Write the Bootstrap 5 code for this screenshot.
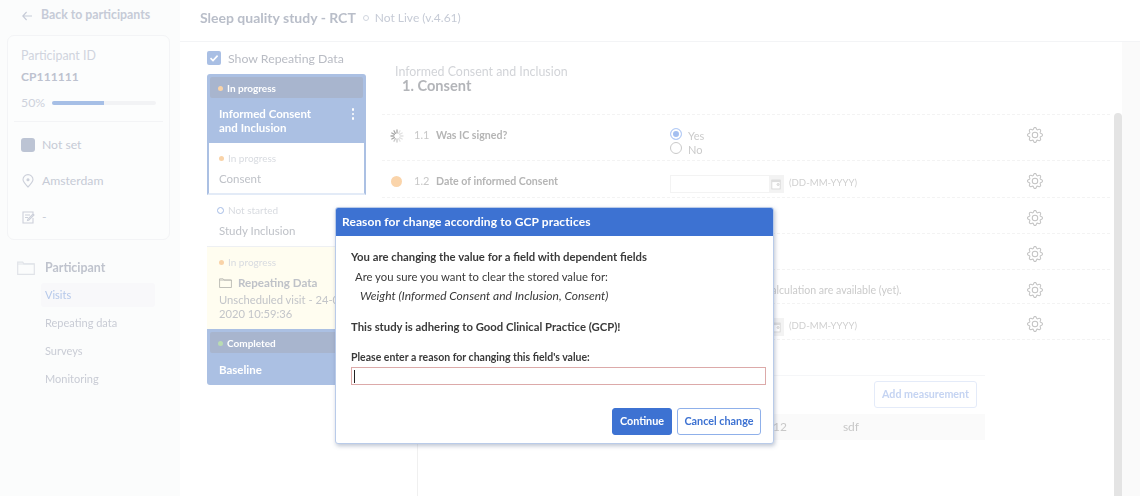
<!DOCTYPE html>
<html lang="en">
<head>
<meta charset="utf-8">
<title>Reason for change</title>
<link rel="stylesheet" href="https://cdn.jsdelivr.net/npm/bootstrap@5.3.0/dist/css/bootstrap.min.css">
<style>
html,body{height:496px;overflow:hidden;background:#fff;font-family:"Lato","Liberation Sans",sans-serif;font-size:12px;}
.stage{position:relative;width:1140px;height:496px;overflow:hidden;}
.backdrop-page{height:496px;filter:blur(.45px);}
.side{width:180px;background:#fbfcfc;flex:none;height:496px;padding:0 10px 0 7px;}
.back{height:31px;margin-bottom:4px;padding-left:15px;color:#c6cbd7;font-weight:700;font-size:12.3px;gap:9px;}
.pcard{height:205px;border:1px solid #f3f4f6;border-radius:7px;background:#fcfdfd;padding:12px 6px 0 6px;}
.pid{color:#d0d4de;font-size:12.4px;line-height:16px;padding-left:7px;}
.pcode{color:#bdc2cf;font-size:12px;font-weight:700;line-height:16px;margin-top:5px;padding-left:7px;letter-spacing:.1px;}
.pbar-wrap{padding-left:7px;margin-top:10px;gap:7px;color:#ced2dc;font-size:12.3px;line-height:16px;}
.pbar{height:4px;width:104px;background:#f2f3f5;border-radius:2px;}
.pbar .progress-bar{background:#a6bfe6;}
.pdiv{border-top:1px solid #f3f4f6;margin:10px 0 5px;}
.pmeta{height:36px;padding-left:7px;color:#c6cbd6;font-size:12.2px;gap:7px;}
.pmeta svg,.swatch{width:14px;height:14px;flex:none;}
.swatch{background:#bcc4d4;border-radius:3px;}
.pgroup{margin-top:17px;padding-left:10px;height:22px;gap:10px;color:#bfc3cd;font-weight:700;font-size:12.4px;}
.snav{margin-left:34px;width:114px;margin-top:4px;}
.snav-item{height:24px;margin-bottom:4px;padding-left:4px;color:#c9ccd5;font-size:11px;display:flex;align-items:center;border-radius:3px;}
.snav-item.on{background:#f8f8fa;color:#b5c8ea;}
.topbar{height:42px;border-bottom:1px solid #f3f4f6;padding-left:20px;}
.ttl{color:#b9bec9;font-size:14px;font-weight:700;}
.ring{width:6px;height:6px;border:1px solid #d0d5de;border-radius:50%;margin:0 6px 0 7px;}
.live{color:#c6cbd6;font-size:12px;}
.content{height:454px;padding-left:27px;}
.stepcol{width:159px;flex:none;}
.repeat{height:32px;gap:7px;padding-top:2px;color:#b9bcc4;font-size:12.3px;}
.chk{width:14px;height:14px;background:#a9bfe4;border-radius:2px;color:#fff;flex:none;margin-top:-2px;}
.stepblue{background:#abc0e3;color:#fff;padding:3px 3px 0;font-weight:700;}
.chip{height:21px;background:#a8b5ce;border-radius:2px;font-size:10px;padding:1px 0 0 8px;gap:4px;}
.dot{width:5px;height:5px;border-radius:50%;display:inline-block;flex:none;}
.dot-o{background:#f9d3a8;}
.dot-g{background:#b9dcb2;}
.dot-b{width:7px;height:7px;border:1px solid #a4bbe6;background:#fff;margin-left:-2px;}
.sname{font-size:11.5px;line-height:13.5px;padding:9px 9px 9px;display:flex;justify-content:space-between;}
.kebab{gap:2px;margin-top:1px;}
.kebab i{display:block;width:2.5px;height:2.5px;background:#fff;border-radius:50%;}
.stepw{height:52px;padding:9px 0 0 12px;background:#fff;border-bottom:1px solid #eef0f3;}
.stepw.act{border:solid #abc0e3;border-width:0 2px 2px;padding-left:10px;border-bottom-color:#e3ebf7;}
.sstat{font-size:10px;color:#d8dbe0;gap:4px;line-height:12px;}
.sval{font-size:11.5px;color:#bfc2c8;margin-top:8px;line-height:14px;}
.stepy{height:82px;background:#fffdf0;padding:9px 6px 0 12px;}
.rdata{font-size:11.6px;font-weight:700;color:#bfc2c8;margin-top:8px;gap:6px;line-height:14px;}
.rsub{font-size:11.2px;color:#c3c5c9;line-height:13.5px;margin-top:3px;}
.stepblue.last{height:56px;border-radius:0 0 3px 3px;}
.stepblue.last .sname{padding-top:10px;}
.stepblue.first{border-radius:3px 3px 0 0;}
.formcol{width:728px;margin-left:16px;flex:none;}
.ftitle{padding:23px 0 0 13px;height:72px;line-height:14px;color:#d2d4d8;font-size:12.4px;}
.ftitle b{display:block;color:#b3b5b9;font-size:14.6px;line-height:14px;padding-left:7px;}
.frow{border-top:1px dashed #f3f3f3;padding-top:13px;display:flex;align-items:flex-start;line-height:14px;font-size:10.6px;color:#b5b5b5;}
.h46{height:46px}.h37{height:37px}.h36{height:36px}.h34{height:34px}
.fst{width:32px;padding-left:8px;flex:none;height:14px;}
.fno{width:22px;flex:none;color:#c8c8c8;font-size:11px;}
.flbl{width:234px;flex:none;font-weight:700;}
.fval{width:356px;flex:none;color:#cbcbcb;}
.fgear{width:18px;height:16px;margin-top:-1px;flex:none;color:#c3c3c3;}
.orange{width:11px;height:11px;border-radius:50%;background:#fad4aa;display:block;margin:2px 0 0 1px;}
.radio{gap:6px;color:#cbcbcb;height:14px;font-size:11px;padding-top:2px;}
.radio i{width:12px;height:12px;border:1px solid #c9c9c9;border-radius:50%;background:#fff;flex:none;margin-top:-4px;}
.radio i.on{border-color:#b5ccf6;background:#a4bff0;box-shadow:inset 0 0 0 2px #fff;}
.dinp{width:114px;height:18px;border:1px solid #f3f3f3;margin-top:1px;justify-content:flex-end;flex:none;}
.dcal{width:14px;height:16px;background:#f3f3f3;padding:3px 1px;}
.dtxt{margin-left:5px;margin-top:2px;font-size:9.6px;color:#d0d0d0;}
.rsec{margin-left:35px;width:568px;height:160px;border-top:1px solid #f5f6f8;border-left:1px solid #f0f0f0;}
.addm{height:27px;width:103px;margin:5px 8px 0 auto;display:block;padding:0;font-size:10.7px;font-weight:700;color:#c5d4f2;background:#fff;border:1px solid #e4ebf9;border-radius:3px;}
.rtab{height:26px;margin-top:6px;background:#fafafa;color:#c8c8c8;font-size:12px;padding-left:355px;gap:56px;}
.sbar{width:8px;margin:71px 0 0 4px;background:#e4e4e4;border-radius:4px 4px 0 0;flex:none;height:383px;}
.strack{width:18px;background:#fafafa;height:454px;flex:none;}
.dlg{position:absolute;left:335px;top:207px;width:439px;height:237px;background:#fff;border:1px solid #b9cbe9;border-radius:3px;box-shadow:1px 2px 4px rgba(70,90,130,.35);color:#3a3a3a;z-index:5;overflow:hidden;}
.dlg-h{height:28px;background:#3d72d2;color:#fff;font-size:12px;font-weight:700;padding:0 0 1px 6px;letter-spacing:.1px;}
.dlg-b{padding:11px 7px 0 15px;font-size:11.3px;line-height:19.5px;}
.dlg-b p{margin:0;}
.dlg-b .i1{padding-left:4px;}
.dlg-b .i2{padding-left:9px;font-style:italic;font-size:12px;}
.dlg-b .gap{margin-top:11.5px;}
.dlg-b .dlg-l{font-size:10.5px;font-weight:700;margin-top:11.5px;line-height:18.5px;}
.reason{height:18px;min-height:0;border-radius:0;border:1px solid #dcaaa9;padding:0 2px;margin-top:0;box-shadow:none;background:#fff;}
.caret-bar{display:block;width:1px;height:13px;background:#222;margin-top:2px;}
.dlg-f{gap:5px;padding:23px 12px 0 0;}
.dlg-f .btn{height:27px;font-size:10.8px;font-weight:700;padding:0;border-radius:3px;}
.bcont{width:60px;background:#3d72d2;border:1px solid #3d72d2;color:#fff;}
.bcanc{width:84px;background:#fff;border:1px solid #8fb0ea;color:#3d72d2;}
</style>
</head>
<body>
<svg width="0" height="0" class="d-none">
<symbol id="g" viewBox="0 0 16 16"><path fill="currentColor" d="M8 4.754a3.246 3.246 0 1 0 0 6.492 3.246 3.246 0 0 0 0-6.492zM5.754 8a2.246 2.246 0 1 1 4.492 0 2.246 2.246 0 0 1-4.492 0z"/><path fill="currentColor" d="M9.796 1.343c-.527-1.79-3.065-1.79-3.592 0l-.094.319a.873.873 0 0 1-1.255.52l-.292-.16c-1.64-.892-3.433.902-2.54 2.541l.159.292a.873.873 0 0 1-.52 1.255l-.319.094c-1.79.527-1.79 3.065 0 3.592l.319.094a.873.873 0 0 1 .52 1.255l-.16.292c-.892 1.64.901 3.434 2.541 2.54l.292-.159a.873.873 0 0 1 1.255.52l.094.319c.527 1.79 3.065 1.79 3.592 0l.094-.319a.873.873 0 0 1 1.255-.52l.292.16c1.64.893 3.434-.902 2.54-2.541l-.159-.292a.873.873 0 0 1 .52-1.255l.319-.094c1.79-.527 1.79-3.065 0-3.592l-.319-.094a.873.873 0 0 1-.52-1.255l.16-.292c.893-1.64-.902-3.433-2.541-2.54l-.292.159a.873.873 0 0 1-1.255-.52l-.094-.319zm-2.633.283c.246-.835 1.428-.835 1.674 0l.094.319a1.873 1.873 0 0 0 2.693 1.115l.291-.16c.764-.415 1.6.42 1.184 1.185l-.159.292a1.873 1.873 0 0 0 1.116 2.692l.318.094c.835.246.835 1.428 0 1.674l-.319.094a1.873 1.873 0 0 0-1.115 2.693l.16.291c.415.764-.42 1.6-1.185 1.184l-.291-.159a1.873 1.873 0 0 0-2.693 1.116l-.094.318c-.246.835-1.428.835-1.674 0l-.094-.319a1.873 1.873 0 0 0-2.692-1.115l-.292.16c-.764.415-1.6-.42-1.184-1.185l.159-.291A1.873 1.873 0 0 0 1.945 8.93l-.319-.094c-.835-.246-.835-1.428 0-1.674l.319-.094A1.873 1.873 0 0 0 3.06 4.377l-.16-.292c-.415-.764.42-1.6 1.185-1.184l.292.159a1.873 1.873 0 0 0 2.692-1.115l.094-.319z"/></symbol>
<symbol id="c" viewBox="0 0 14 16"><rect x="1" y="1.5" width="12" height="13" fill="#fff" stroke="#cfcfcf"/><rect x="1" y="1.5" width="12" height="3" fill="#dedede"/><circle cx="10" cy="8" r="1.4" fill="none" stroke="#bdbdbd"/></symbol>
<symbol id="f" viewBox="0 0 18 14"><path d="M.7 13.3V1.2h5l1.2 1.6h10.4v10.5z" fill="none" stroke="currentColor" stroke-width="1.2"/><path d="M.7 3h16.6" stroke="currentColor" stroke-width="1"/></symbol>
</svg>
<div class="stage">
<div class="backdrop-page d-flex">
  <aside class="side">
    <div class="back d-flex align-items-center">
      <svg width="10" height="10" viewBox="0 0 10 10" fill="none" stroke="#c6cbd7" stroke-width="1.1"><path d="M10 5H.8M4.6 1 .8 5l3.8 4"/></svg>
      <span>Back to participants</span>
    </div>
    <div class="pcard">
      <div class="pid">Participant ID</div>
      <div class="pcode">CP111111</div>
      <div class="pbar-wrap d-flex align-items-center">
        <span>50%</span>
        <div class="progress pbar"><div class="progress-bar" style="width:50%"></div></div>
      </div>
      <div class="pdiv"></div>
      <div class="pmeta d-flex align-items-center"><span class="swatch"></span><span>Not set</span></div>
      <div class="pmeta d-flex align-items-center"><svg viewBox="0 0 14 14" fill="none" stroke="#ccd0da" stroke-width="1.1"><path d="M7 13C4 10 2 8 2 5.6a5 5 0 0 1 10 0C12 8 10 10 7 13z"/><circle cx="7" cy="5.8" r="1" fill="#ccd0da"/></svg><span>Amsterdam</span></div>
      <div class="pmeta d-flex align-items-center"><svg viewBox="0 0 14 14" fill="none" stroke="#ccd0da" stroke-width="1.1"><path d="M12 8v5H2V2h10v2M4 5h5M4 7.5h3M6.5 10.5l1.2-.3L13 5l-1-1-5.2 5.2z"/></svg><span>-</span></div>
    </div>
    <div class="pgroup d-flex align-items-center"><svg width="18" height="14" style="color:#e0e3e8"><use href="#f"/></svg><span>Participant</span></div>
    <div class="snav">
      <div class="snav-item on">Visits</div>
      <div class="snav-item">Repeating data</div>
      <div class="snav-item">Surveys</div>
      <div class="snav-item">Monitoring</div>
    </div>
  </aside>
  <main class="flex-grow-1">
    <div class="topbar d-flex align-items-center pb-2">
      <span class="ttl">Sleep quality study - RCT</span><span class="ring"></span><span class="live">Not Live (v.4.61)</span>
    </div>
    <div class="content d-flex">
      <div class="stepcol">
        <div class="repeat d-flex align-items-center">
          <span class="chk d-flex align-items-center justify-content-center"><svg width="10" height="10" viewBox="0 0 10 10" fill="none" stroke="#fff" stroke-width="1.6"><path d="M1.5 5.2 4 7.6l4.6-5"/></svg></span>
          <span>Show Repeating Data</span>
        </div>
        <div class="stepblue first">
          <div class="chip d-flex align-items-center"><span class="dot dot-o"></span><span>In progress</span></div>
          <div class="sname"><span>Informed Consent<br>and Inclusion</span><span class="kebab d-flex flex-column"><i></i><i></i><i></i></span></div>
        </div>
        <div class="stepw act">
          <div class="sstat d-flex align-items-center"><span class="dot dot-o"></span><span>In progress</span></div>
          <div class="sval">Consent</div>
        </div>
        <div class="stepw">
          <div class="sstat d-flex align-items-center"><span class="dot dot-b"></span><span>Not started</span></div>
          <div class="sval">Study Inclusion</div>
        </div>
        <div class="stepy">
          <div class="sstat d-flex align-items-center"><span class="dot dot-o"></span><span>In progress</span></div>
          <div class="rdata d-flex align-items-center"><svg width="13" height="10" style="color:#b5b5b0"><use href="#f"/></svg><span>Repeating Data</span></div>
          <div class="rsub">Unscheduled visit - 24-01-<br>2020 10:59:36</div>
        </div>
        <div class="stepblue last">
          <div class="chip d-flex align-items-center"><span class="dot dot-g"></span><span>Completed</span></div>
          <div class="sname"><span>Baseline</span></div>
        </div>
      </div>
      <div class="formcol">
        <div class="ftitle">Informed Consent and Inclusion<b>1. Consent</b></div>
        <div class="frow h46">
          <div class="fst"><svg width="14" height="14" viewBox="0 0 14 14" stroke-width="1.3" stroke-linecap="round" fill="none"><path stroke="#a8a8a8" d="M7 1v3M4 1.8l1.4 2.6M1.8 4l2.6 1.4M1 7h3M1.8 10l2.6-1.4"/><path stroke="#c8c8c8" d="M4 12.2l1.4-2.6M7 13v-3"/><path stroke="#e2e2e2" d="M10 12.2 8.6 9.6M12.2 10 9.6 8.6M13 7h-3M12.2 4 9.6 5.4M10 1.8 8.6 4.4"/></svg></div>
          <div class="fno">1.1</div><div class="flbl">Was IC signed?</div>
          <div class="fval"><div class="radio d-flex align-items-center"><i class="on"></i><span>Yes</span></div><div class="radio d-flex align-items-center"><i></i><span>No</span></div></div>
          <svg class="fgear"><use href="#g"/></svg>
        </div>
        <div class="frow h37">
          <div class="fst"><span class="orange"></span></div>
          <div class="fno">1.2</div><div class="flbl">Date of informed Consent</div>
          <div class="fval d-flex"><div class="dinp d-flex"><div class="dcal d-flex"><svg width="12" height="11"><use href="#c"/></svg></div></div><span class="dtxt">(DD-MM-YYYY)</span></div>
          <svg class="fgear"><use href="#g"/></svg>
        </div>
        <div class="frow h36"><div class="fst"></div><div class="fno"></div><div class="flbl"></div><div class="fval"></div><svg class="fgear"><use href="#g"/></svg></div>
        <div class="frow h36"><div class="fst"></div><div class="fno"></div><div class="flbl"></div><div class="fval"></div><svg class="fgear"><use href="#g"/></svg></div>
        <div class="frow h34"><div class="fst"></div><div class="fno"></div><div class="flbl"></div><div class="fval"><span>Not all fields for this calculation are available (yet).</span></div><svg class="fgear"><use href="#g"/></svg></div>
        <div class="frow h36"><div class="fst"></div><div class="fno"></div><div class="flbl"></div><div class="fval d-flex"><div class="dinp d-flex"><div class="dcal d-flex"><svg width="12" height="11"><use href="#c"/></svg></div></div><span class="dtxt">(DD-MM-YYYY)</span></div><svg class="fgear"><use href="#g"/></svg></div>
        <div class="frow h36"></div>
        <div class="rsec">
          <button type="button" class="addm">Add measurement</button>
          <div class="rtab d-flex align-items-center"><span>12</span><span>sdf</span></div>
        </div>
      </div>
      <div class="sbar"></div>
      <div class="strack"></div>
    </div>
  </main>
</div>
<div class="dlg">
  <div class="dlg-h d-flex align-items-center">Reason for change according to GCP practices</div>
  <div class="dlg-b">
    <p class="fw-bold">You are changing the value for a field with dependent fields</p>
    <p class="i1">Are you sure you want to clear the stored value for:</p>
    <p class="i2">Weight (Informed Consent and Inclusion, Consent)</p>
    <p class="fw-bold gap">This study is adhering to Good Clinical Practice (GCP)!</p>
    <p class="dlg-l">Please enter a reason for changing this field's value:</p>
    <div class="form-control reason"><span class="caret-bar"></span></div>
  </div>
  <div class="dlg-f d-flex justify-content-end">
    <button type="button" class="btn bcont">Continue</button>
    <button type="button" class="btn bcanc">Cancel change</button>
  </div>
</div>
</div>
<script src="https://cdn.jsdelivr.net/npm/bootstrap@5.3.0/dist/js/bootstrap.bundle.min.js"></script>
</body>
</html>
